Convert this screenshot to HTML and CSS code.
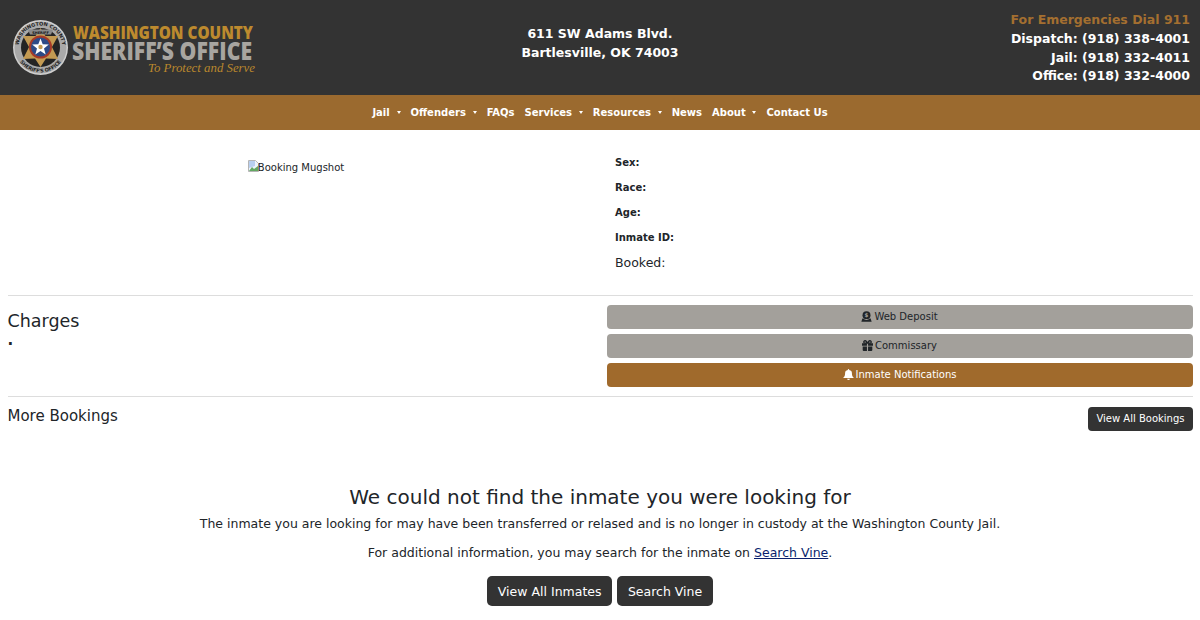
FILE: index.html
```html
<!DOCTYPE html>
<html lang="en">
<head>
<meta charset="utf-8">
<title>Inmate</title>
<link rel="stylesheet" href="styles.css">
</head>
<body>
<header class="top">
  <a class="logo" href="#">
    <svg width="250" height="66" viewBox="12 15 250 66" class="logo-svg">
      <defs>
        <path id="arc-top" d="M18.500 47.500a22 22 0 0 1 44 0"/>
        <path id="arc-bot" d="M15.500 47.500a25 25 0 0 0 50 0"/>
      </defs>
      <circle cx="40.500" cy="47.500" r="27.500" fill="#cfcfcf"/>
      <circle cx="40.500" cy="47.500" r="26" fill="#a9a9a9"/>
      <circle cx="40.500" cy="47.500" r="19.500" fill="#242424"/>
      <text class="seal"><textPath href="#arc-top" startOffset="50%" text-anchor="middle" textLength="64">WASHINGTON COUNTY</textPath></text>
      <text class="seal"><textPath href="#arc-bot" startOffset="50%" text-anchor="middle" textLength="48">SHERIFF'S OFFICE</textPath></text>
      <polygon points="40.500,28 45.500,36 58,36 52,47 58,59 46,58.500 40.500,67 35,58.500 23,59 29,47 23,36 35.500,36" fill="#c39a52"/>
      <path d="M28 29.500h25l-2 5H30z" fill="#8b8b8b"/>
      <text x="40.500" y="33.800" class="seal-small" text-anchor="middle">SHERIFF</text>
      <circle cx="40.500" cy="47" r="11.500" fill="#a63a28"/>
      <circle cx="40.500" cy="47" r="9.500" fill="#2d4a86"/>
      <polygon points="40.500,38.500 42.700,44.300 48.800,44.600 44,48.400 45.700,54.400 40.500,51 35.300,54.400 37,48.400 32.200,44.600 38.300,44.300" fill="#fff"/>
      <circle cx="40.500" cy="47" r="2.200" fill="#c39a52"/>
      <text x="73" y="38.500" class="logo-l1" textLength="180" lengthAdjust="spacingAndGlyphs">WASHINGTON COUNTY</text>
      <text x="72" y="60" class="logo-l2" textLength="180" lengthAdjust="spacingAndGlyphs">SHERIFF’S OFFICE</text>
      <text x="148" y="72" class="logo-l3" textLength="107" lengthAdjust="spacingAndGlyphs">To Protect and Serve</text>
    </svg>
  </a>
  <div class="address">611 SW Adams Blvd.<br>Bartlesville, OK 74003</div>
  <div class="phones">
    <div class="emerg">For Emergencies Dial 911</div>
    <div>Dispatch: (918) 338-4001</div>
    <div>Jail: (918) 332-4011</div>
    <div>Office: (918) 332-4000</div>
  </div>
</header>
<nav class="nav">
  <a href="#" class="drop">Jail</a>
  <a href="#" class="drop">Offenders</a>
  <a href="#">FAQs</a>
  <a href="#" class="drop">Services</a>
  <a href="#" class="drop">Resources</a>
  <a href="#">News</a>
  <a href="#" class="drop">About</a>
  <a href="#">Contact Us</a>
</nav>
<main class="main">
  <section class="info">
    <div class="photo">
      <span class="broken"><svg width="11" height="12" viewBox="0 0 11 12" class="broken-icon"><path d="M.5.500h7l3 3v8H.5z" fill="#eef3fb" stroke="#b5b5b5"/><path d="M1 1h6v5L1 8z" fill="#b8cff0"/><path d="M1 11l3-4 2 2 4-3v5z" fill="#63a863"/></svg>Booking Mugshot</span>
    </div>
    <div class="facts">
      <p class="fact">Sex:</p>
      <p class="fact">Race:</p>
      <p class="fact">Age:</p>
      <p class="fact">Inmate ID:</p>
      <p class="booked">Booked:</p>
    </div>
  </section>
  <hr class="rule">
  <section class="charges">
    <div class="charges-left">
      <h2 class="h-charges">Charges</h2>
      <div class="dot">.</div>
    </div>
    <div class="actions">
      <a href="#" class="btn gray"><svg class="ico" width="11" height="11" viewBox="0 0 16 16"><circle cx="8" cy="6" r="5.800" fill="#212529"/><path d="M2 10.800 0.500 15.500h15L14 10.800l-1.200 0A7 7 0 0 1 8 13a7 7 0 0 1-4.800-2.200z" fill="#212529"/><text x="8" y="9" class="dollar" text-anchor="middle">$</text></svg>Web Deposit</a>
      <a href="#" class="btn gray"><svg class="ico" width="11" height="11" viewBox="0 0 16 16"><path d="M0 4.800h7.200v3.400H0zM8.800 4.800H16v3.400H8.800zM1 9.400h6.200V16H2.500A1.500 1.500 0 0 1 1 14.500zM8.800 9.400H15v5.100a1.500 1.500 0 0 1-1.500 1.500H8.800z" fill="#212529"/><path d="M8 4.500 5.800 1.500A1.900 1.900 0 0 0 3 4l1 .5zM8 4.500l2.200-3A1.900 1.900 0 0 1 13 4l-1 .5z" fill="#fff0" stroke="#212529" stroke-width="2"/></svg>Commissary</a>
      <a href="#" class="btn gold"><svg class="ico" width="11" height="11" viewBox="0 0 16 16"><path d="M8 16a2 2 0 0 0 2-2H6a2 2 0 0 0 2 2zM8 0a1 1 0 0 0-1 1v.600A5 5 0 0 0 3 6.500c0 3-1 4.800-2.500 6V13h15v-.500C14 11.300 13 9.500 13 6.500a5 5 0 0 0-4-4.900V1a1 1 0 0 0-1-1z" fill="#fff"/></svg>Inmate Notifications</a>
    </div>
  </section>
  <hr class="rule">
  <section class="more">
    <h3 class="h-more">More Bookings</h3>
    <a href="#" class="btn-dark-sm">View All Bookings</a>
  </section>
  <section class="notfound">
    <h2 class="nf-title">We could not find the inmate you were looking for</h2>
    <p class="nf-text">The inmate you are looking for may have been transferred or relased and is no longer in custody at the Washington County Jail.</p>
    <p class="nf-text">For additional information, you may search for the inmate on <a href="#" class="link">Search Vine</a>.</p>
    <div class="nf-btns">
      <a href="#" class="btn-dark">View All Inmates</a>
      <a href="#" class="btn-dark">Search Vine</a>
    </div>
  </section>
</main>
</body>
</html>
```
FILE: styles.css
```css
* { box-sizing: border-box; }
html, body { margin: 0; padding: 0; }
body {
  font-family: "DejaVu Sans", sans-serif;
  font-size: 12.500px;
  line-height: 1.5;
  color: #212529;
  background: #fff;
  overflow: hidden;
}
.top {
  height: 95px;
  background: #333;
  display: grid;
  grid-template-columns: 1fr 1fr 1fr;
  align-items: center;
  padding: 0 10px;
  color: #fff;
  font-weight: 700;
}
.logo { display: block; line-height: 0; margin-left: 2px; }
.logo-svg { display: block; margin-top: 1px; }
.seal { font: 700 5px "DejaVu Sans", sans-serif; fill: #222; }
.seal-small { font: 700 3.500px "DejaVu Sans", sans-serif; fill: #111; }
.logo-l1 { font: 800 17px "Open Sans", sans-serif; fill: #bd8a2e; }
.logo-l2 { font: 800 24px "Open Sans", sans-serif; fill: #a8a5a0; }
.logo-l3 { font: italic 400 12px "Liberation Serif", serif; fill: #b9872d; }
.address { text-align: center; font-size: 12.500px; line-height: 18.750px; padding-bottom: 8px; }
.phones { text-align: right; font-size: 12.500px; line-height: 18.750px; padding-top: 2px; }
.emerg { color: #a46f30; }
.nav {
  height: 35px;
  background: #9b6a2f;
  display: flex;
  justify-content: center;
  align-items: center;
  gap: 10px;
}
.nav a {
  color: #fff;
  font-weight: 700;
  font-size: 10px;
  text-decoration: none;
  white-space: nowrap;
}
.drop::after {
  content: "";
  display: inline-block;
  margin-left: 6.800px;
  vertical-align: 2px;
  border-top: 3px solid #fff;
  border-left: 2px solid transparent;
  border-right: 2px solid transparent;
}
.main { padding: 0 7.500px; }
.info {
  display: grid;
  grid-template-columns: 1fr 586px;
  column-gap: 15px;
  padding-top: 25px;
  height: 165px;
}
.photo { display: flex; justify-content: center; font-size: 10px; line-height: 15px; padding-top: 5px; padding-right: 7px; }
.broken { display: inline-flex; align-items: flex-start; }
.broken-icon { flex: none; margin-right: -1px; }
.facts { padding-left: 8.500px; }
.fact { margin: 0; font-size: 10px; font-weight: 700; line-height: 15px; height: 25px; }
.booked { margin: 0; font-size: 12.500px; line-height: 19px; margin-top: -2px; }
.rule { border: 0; border-top: 1px solid #ddd; margin: 0; }
.charges {
  display: grid;
  grid-template-columns: 1fr 586px;
  column-gap: 15px;
  height: 100px;
  padding-top: 9px;
}
.h-charges { margin: 1.500px 0 0; font-weight: 400; font-size: 17.500px; line-height: 28px; }
.dot { font-size: 15px; line-height: 16px; font-weight: 700; margin-top: -2.500px; }
.actions { display: flex; flex-direction: column; gap: 5px; }
.btn {
  height: 24px;
  border-radius: 4px;
  display: flex;
  justify-content: center;
  align-items: center;
  font-size: 10px;
  padding-bottom: 1px;
  text-decoration: none;
}
.ico { margin-right: 2px; flex: none; }
.dollar { font: 700 8px "DejaVu Sans", sans-serif; fill: #a3a09b; }
.gray { background: #a3a09b; color: #212529; }
.gold { background: #a06a2c; color: #fff; }
.more { display: flex; justify-content: space-between; align-items: flex-start; padding-top: 10px; height: 72px; }
.h-more { margin: 0; font-weight: 400; font-size: 15px; line-height: 19px; }
.btn-dark-sm {
  background: #333;
  color: #fff;
  font-size: 10px;
  line-height: 16px;
  padding: 4px 8px;
  border-radius: 4px;
  text-decoration: none;
}
.notfound { text-align: center; padding-top: 14px; }
.nf-title { margin: 0 0 3px; font-weight: 400; font-size: 20px; line-height: 28px; }
.nf-text { margin: 0 0 9px; font-size: 12.500px; line-height: 20px; }
.link { color: #0a1f6e; text-decoration: underline; }
.nf-btns { display: flex; justify-content: center; gap: 5px; margin-top: 13px; }
.btn-dark {
  background: #333;
  color: #fff;
  font-size: 12.500px;
  line-height: 20px;
  padding: 6px 10.700px 4px;
  border-radius: 5px;
  text-decoration: none;
}
```
